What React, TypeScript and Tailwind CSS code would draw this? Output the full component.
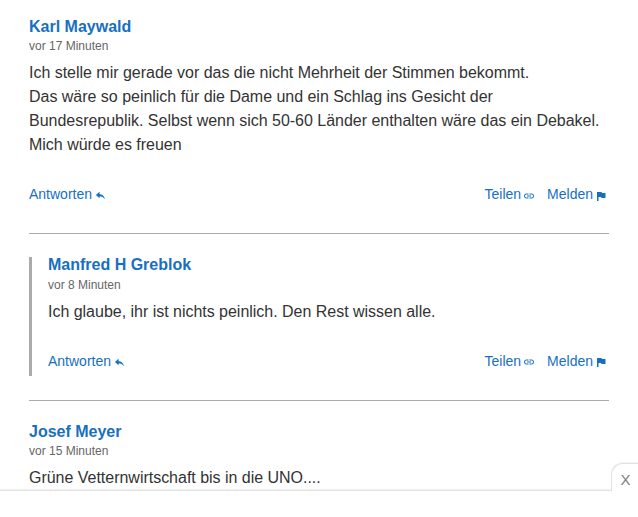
import { ReactNode } from 'react';

type CommentProps = {
  author: string;
  time: string;
  lines: string[];
  actions?: boolean;
};

function ReplyIcon() {
  return (
    <svg viewBox="0 0 24 24" className="mt-[3px] ml-[3px] size-[11px] fill-current">
      <path d="M10 9V4l-8 7 8 7v-4c5 0 8 1 11 6v-2c-1-5-5-9-11-9z" />
    </svg>
  );
}

function LinkIcon() {
  return (
    <svg viewBox="0 0 24 24" className="mt-[3px] ml-[2px] size-3 fill-current">
      <path d="M3.900 12c0-1.710 1.390-3.100 3.100-3.100h4V7H7c-2.760 0-5 2.240-5 5s2.240 5 5 5h4v-1.900H7c-1.710 0-3.100-1.390-3.100-3.100zM8 13h8v-2H8v2zm9-6h-4v1.900h4c1.710 0 3.100 1.390 3.100 3.100s-1.390 3.100-3.100 3.100h-4V17h4c2.760 0 5-2.240 5-5s-2.240-5-5-5z" />
    </svg>
  );
}

function FlagIcon() {
  return (
    <svg viewBox="0 0 24 24" className="mt-[3px] ml-[2px] size-3 fill-current">
      <path d="M14 6L13 4H4v18h3v-8h5l1 2h8V6z" />
    </svg>
  );
}

function Action({ label, children }: { label: string; children: ReactNode }) {
  return (
    <button className="flex h-5 items-center text-sm leading-5 text-[#1770bf]">
      {label}
      {children}
    </button>
  );
}

function Comment({ author, time, lines, actions = true }: CommentProps) {
  return (
    <article>
      <h3 className="text-base leading-[23.4px] font-bold text-[#1770bf]">{author}</h3>
      <p className="text-xs leading-4 text-[#666]">{time}</p>
      <div className="mt-[6.8px] text-base leading-6 tracking-[-0.02px] whitespace-nowrap text-[#333]">
        {lines.map((line) => (
          <p key={line}>{line}</p>
        ))}
      </div>
      {actions && (
        <div className="mt-[27.2px] flex justify-between pr-[2px]">
          <Action label="Antworten">
            <ReplyIcon />
          </Action>
          <div className="flex gap-3">
            <Action label="Teilen">
              <LinkIcon />
            </Action>
            <Action label="Melden">
              <FlagIcon />
            </Action>
          </div>
        </div>
      )}
    </article>
  );
}

export default function App() {
  return (
    <div className="relative h-[517px] overflow-hidden bg-white font-['Liberation_Sans',Arial,sans-serif]">
      <main className="px-[29px] pt-[15px]">
        <div className="h-[219px] border-b border-[#aaa]">
          <Comment
            author="Karl Maywald"
            time="vor 17 Minuten"
            lines={[
              'Ich stelle mir gerade vor das die nicht Mehrheit der Stimmen bekommt.',
              'Das wäre so peinlich für die Dame und ein Schlag ins Gesicht der',
              'Bundesrepublik. Selbst wenn sich 50-60 Länder enthalten wäre das ein Debakel.',
              'Mich würde es freuen',
            ]}
          />
        </div>
        <div className="h-[167px] border-b border-[#aaa] pt-[23px]">
          <div className="flow-root h-[119px] border-l-3 border-[#aaa] pl-4">
            <div className="-mt-[3.6px]">
              <Comment
                author="Manfred H Greblok"
                time="vor 8 Minuten"
                lines={['Ich glaube, ihr ist nichts peinlich. Den Rest wissen alle.']}
              />
            </div>
          </div>
        </div>
        <div className="pt-[19px]">
          <Comment
            author="Josef Meyer"
            time="vor 15 Minuten"
            lines={['Grüne Vetternwirtschaft bis in die UNO....']}
            actions={false}
          />
        </div>
      </main>

      {/* sticky ad slot covering the bottom of the list */}
      <div className="absolute inset-x-0 bottom-0 h-[27px] border-t border-[#e2e2e2] bg-white shadow-[0_-1px_1px_rgba(0,0,0,0.05)]" />
      <button className="absolute right-0 bottom-[26px] h-7 w-[27px] rounded-tl-xl border-t border-l border-[#e2e2e2] bg-white pt-[5px] pl-px text-[15px] text-[#808080] shadow-[0_-1px_1px_rgba(0,0,0,0.05)]">
        X
      </button>
    </div>
  );
}
